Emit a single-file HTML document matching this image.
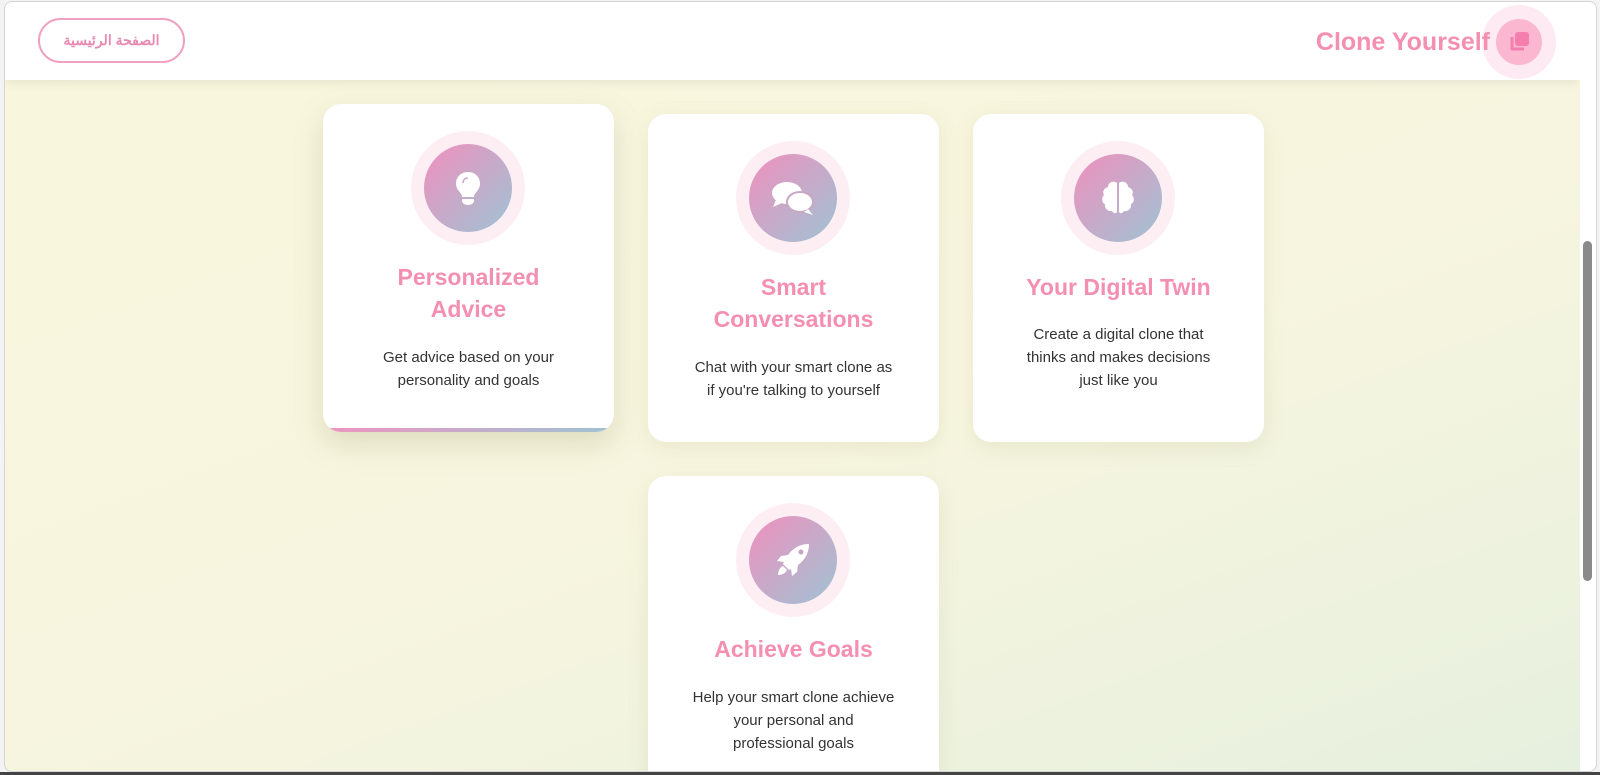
<!DOCTYPE html>
<html><head><meta charset="utf-8"><style>
*{box-sizing:border-box;margin:0;padding:0}
body{width:1600px;height:775px;background:#f3f3f3;position:relative;overflow:hidden;font-family:"Liberation Sans","Noto Sans CJK SC",sans-serif}
.win{position:absolute;left:4px;top:1px;width:1593px;height:771px;border:1px solid #d4d4d4;border-radius:8px;overflow:hidden;background:linear-gradient(160deg,#f8f6dc 0%,#f7f5df 55%,#e6f0de 100%)}
.bar{position:absolute;left:0;right:0;top:772px;height:3px;background:#444}
.hdr{position:absolute;left:0;top:0;width:1575px;height:78px;background:#fff;box-shadow:0 2px 10px rgba(0,0,0,.08)}
.btn{position:absolute;left:33px;top:16px;width:147px;height:45px;border:2px solid #f0a0c0;border-radius:23px;color:#e88ab0;font-size:14px;font-weight:bold;text-align:center;line-height:41px}
.logo{position:absolute;right:90px;top:26px;color:#f48fb1;font-weight:bold;font-size:25px}
.lr{position:absolute;left:1477px;top:3px;width:74px;height:74px;border-radius:50%;background:#fdeaf2}
.li{position:absolute;left:1491px;top:17px;width:46px;height:46px;border-radius:50%;background:#fbb6d0}
.sb{position:absolute;left:1575px;top:0;width:17px;height:771px;background:#fff}
.th{position:absolute;left:3px;top:239px;width:9px;height:340px;border-radius:5px;background:#8a8a8a}
.card{position:absolute;width:291px;height:328px;background:#fff;border-radius:18px;box-shadow:0 6px 20px rgba(160,160,100,.15);text-align:center;overflow:hidden}
.ring{position:absolute;left:88px;top:27px;width:114px;height:114px;border-radius:50%;background:#fdeef4}
.ic{position:absolute;left:13px;top:13px;width:88px;height:88px;border-radius:50%;background:linear-gradient(135deg,#f090bd,#9ec3d4);display:flex;align-items:center;justify-content:center}
.t{position:absolute;left:0;right:0;color:#f48fb1;font-weight:bold;font-size:23px;line-height:32px}
.d{position:absolute;left:44px;right:44px;color:#333;font-size:15px;line-height:23px}
</style></head><body>
<div class="win">
<div class="hdr"><div class="btn">الصفحة الرئيسية</div>
<div class="lr"></div><div class="li"><svg style="position:absolute;left:11px;top:11px" width="24" height="24" viewBox="0 0 24 24"><rect x="8" y="2" width="14" height="14" rx="3" fill="#f47fae"/><path d="M5 7v12h12" fill="none" stroke="#f47fae" stroke-width="3" stroke-linejoin="round"/></svg></div>
<div class="logo">Clone Yourself</div></div>

<div class="card" style="left:318px;top:102px;box-shadow:0 12px 28px rgba(150,150,100,.25)">
<div class="ring"><div class="ic"><svg width="26" height="34" viewBox="0 0 26 34"><path d="M13 1C6 1 1 6 1 12.5c0 4 2 6.5 4 9 1.2 1.5 2 3 2 4.5h12c0-1.5.8-3 2-4.5 2-2.5 4-5 4-9C25 6 20 1 13 1z" fill="#fff"/><path d="M7 28h12v1.5c0 2.5-2.5 4.5-6 4.5s-6-2-6-4.5z" fill="#fff"/><path d="M8 12c0-3 2-5 5-5" stroke="#d8a5c0" stroke-width="1.5" fill="none"/></svg></div></div>
<div class="t" style="top:157px">Personalized<br>Advice</div>
<div class="d" style="top:242px">Get advice based on your personality and goals</div>
<div style="position:absolute;left:0;right:0;bottom:0;height:4px;background:linear-gradient(90deg,#ef94bf,#9ec3d4)"></div></div>

<div class="card" style="left:643px;top:112px">
<div class="ring"><div class="ic"><svg width="46" height="38" viewBox="0 0 46 38"><ellipse cx="17" cy="14" rx="15" ry="11" fill="#fff"/><path d="M6 21l-3 7 9-4z" fill="#fff"/><ellipse cx="30" cy="23" rx="13" ry="10" stroke="#c8a8c4" stroke-width="2" fill="#fff"/><path d="M38 30l5 6-9-3z" fill="#fff"/></svg></div></div>
<div class="t" style="top:157px">Smart<br>Conversations</div>
<div class="d" style="top:242px">Chat with your smart clone as if you're talking to yourself</div></div>

<div class="card" style="left:968px;top:112px">
<div class="ring"><div class="ic"><svg width="34" height="36" viewBox="0 0 34 36"><path d="M16 3c-3-3-9-1-9 4-4 1-6 5-4 8-3 3-2 8 1 9-1 4 3 8 7 7 2 3 5 3 5 0z" fill="#fff"/><path d="M18 3c3-3 9-1 9 4 4 1 6 5 4 8 3 3 2 8-1 9 1 4-3 8-7 7-2 3-5 3-5 0z" fill="#fff"/></svg></div></div>
<div class="t" style="top:157px">Your Digital Twin</div>
<div class="d" style="top:209px">Create a digital clone that thinks and makes decisions just like you</div></div>

<div class="card" style="left:643px;top:474px">
<div class="ring"><div class="ic"><svg width="36" height="36" viewBox="0 0 36 36"><path d="M34 2c-9 0-16 4-21 11l-7 1-4 5 7 1-1 2 6 6 2-1 1 7 5-4 1-7c7-5 11-12 11-21z" fill="#fff"/><circle cx="26" cy="10" r="2.5" fill="#c8a3c4"/><path d="M8 24c-3 1-5 5-5 9 4 0 8-2 9-5z" fill="#fff"/></svg></div></div>
<div class="t" style="top:157px">Achieve Goals</div>
<div class="d" style="top:210px;left:30px;right:30px">Help your smart clone achieve<br>your personal and<br>professional goals</div></div>

<div class="sb"><div class="th"></div></div>
</div>
<div class="bar"></div>
</body></html>
